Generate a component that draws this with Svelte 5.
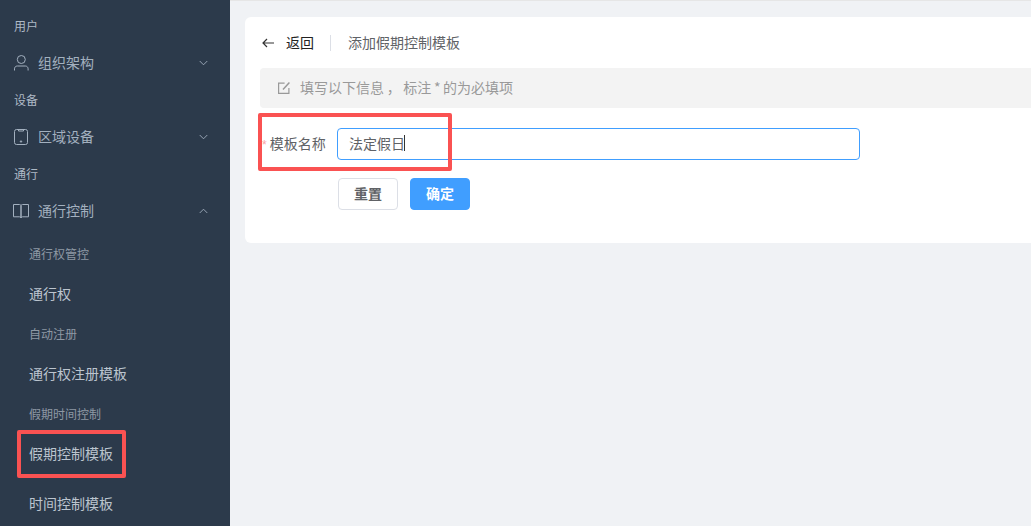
<script>
    let name = '法定假日'

    const subItems = [
        { label: '通行权管控', small: true },
        { label: '通行权' },
        { label: '自动注册', small: true },
        { label: '通行权注册模板' },
        { label: '假期时间控制', small: true },
        { label: '假期控制模板', marked: true },
        { label: '时间控制模板', last: true }
    ]
</script>

<div class="layout">
    <aside class="sidebar">
        <div class="group">用户</div>
        <div class="menu">
            <svg class="icon" viewBox="0 0 16 16" fill="none" stroke="currentColor" stroke-width="1">
                <circle cx="8.300" cy="4.500" r="4" />
                <path d="M1.500 15.500v-1.700c0-1.600 1.200-2.800 2.800-2.800h8c1.600 0 2.800 1.200 2.800 2.800v1.700" />
            </svg>
            <span>组织架构</span>
            <svg class="chev" viewBox="0 0 10 6" fill="none" stroke="currentColor"><path d="M.8.8 5 5 9.200.8" /></svg>
        </div>
        <div class="group">设备</div>
        <div class="menu">
            <svg class="icon" viewBox="0 0 16 16" fill="none" stroke="currentColor" stroke-width="1">
                <rect x="1.500" y=".5" width="13" height="15" rx="2" />
                <path d="M5.500 .5v1.500h5V.5" />
                <circle cx="8" cy="12.500" r=".7" fill="currentColor" />
            </svg>
            <span>区域设备</span>
            <svg class="chev" viewBox="0 0 10 6" fill="none" stroke="currentColor"><path d="M.8.8 5 5 9.200.8" /></svg>
        </div>
        <div class="group">通行</div>
        <div class="menu">
            <svg class="icon" viewBox="0 0 16 16" fill="none" stroke="currentColor" stroke-width="1">
                <path d="M.5 1.500h6c.9 0 1.500.4 1.500 1.200v12.300c0-.7-.6-1.200-1.500-1.200h-6z" />
                <path d="M15.500 1.500h-6c-.9 0-1.500.4-1.500 1.200v12.300c0-.7.6-1.200 1.500-1.200h6z" />
            </svg>
            <span>通行控制</span>
            <svg class="chev" viewBox="0 0 10 6" fill="none" stroke="currentColor"><path d="M.8 5.200 5 1l4.200 4.200" /></svg>
        </div>
        <div class="sub">
            {#each subItems as item}
                <div class="subItem" class:small={item.small} class:last={item.last}>
                    {item.label}
                    {#if item.marked}<i class="mark sideMark"></i>{/if}
                </div>
            {/each}
        </div>
    </aside>

    <main class="content">
        <section class="card">
            <div class="pageHead">
                <svg class="back" viewBox="0 0 12 10" fill="none" stroke="currentColor" stroke-width="1.200">
                    <path d="M12 5H1M5 1 1 5l4 4" />
                </svg>
                <span class="backText">返回</span>
                <span class="divider"></span>
                <span class="title">添加假期控制模板</span>
            </div>

            <div class="notice">
                <svg class="editIcon" viewBox="0 0 12 12" fill="none" stroke="currentColor" stroke-width="1.200">
                    <path d="M10.900 6v5.400H.6V1.100h6" />
                    <path d="M5 7.500 11.400.6" stroke-width="1.500" />
                </svg>
                <span>填写以下信息 ， 标注 * 的为必填项</span>
            </div>

            <form class="row" on:submit|preventDefault>
                <label for="tpl"><em>*</em>模板名称</label>
                <div class="inputWrap">
                    <input id="tpl" type="text" bind:value={name} />
                    <i class="caret"></i>
                </div>
                <i class="mark formMark"></i>
            </form>

            <div class="btns">
                <button type="button" class="reset">重置</button>
                <button type="button" class="ok">确定</button>
            </div>
        </section>
    </main>
</div>

<style>
    :global(body) {
        margin: 0;
        overflow: hidden;
    }

    .layout {
        display: flex;
        width: 1031px;
        height: 526px;
        overflow: hidden;
        font-family: "Noto Sans CJK SC", "Liberation Sans", sans-serif;
        font-size: 14px;
    }

    .sidebar {
        flex: 0 0 230px;
        padding-top: 6px;
        box-sizing: border-box;
        background: #2c3a4b;
        color: #bfcbd9;
        overflow: hidden;
    }

    .group {
        height: 40px;
        padding-left: 14px;
        line-height: 40px;
        font-size: 12px;
        color: #aeb9c6;
    }

    .menu {
        display: flex;
        align-items: center;
        height: 34px;
        padding-left: 13px;
        padding-right: 22px;
        color: #a3b0bf;
    }

    .menu span {
        margin-left: 9px;
        padding-bottom: 2px;
    }

    .icon {
        width: 16px;
        height: 16px;
    }

    .chev {
        width: 9px;
        height: 6px;
        margin-left: auto;
    }

    .sub {
        margin-top: 5px;
        padding-left: 29px;
    }

    .subItem {
        position: relative;
        height: 40px;
        line-height: 40px;
        color: #bcc5cf;
    }

    .subItem.small {
        line-height: 42px;
        font-size: 12px;
        color: #8e98a4;
    }

    .subItem.last {
        margin-top: 10px;
    }

    .content {
        flex: 1;
        min-width: 0;
        padding: 16px 0 0 15px;
        background: #f0f2f5;
        border-top: 1px solid #e6e6e6;
        overflow: hidden;
    }

    .card {
        width: 900px;
        height: 226px;
        padding: 15px;
        box-sizing: border-box;
        background: #fff;
        border-radius: 6px;
    }

    .pageHead {
        display: flex;
        align-items: center;
        height: 21px;
        margin-left: 2px;
    }

    .back {
        width: 12px;
        height: 10px;
        color: #333;
    }

    .backText {
        margin-left: 12px;
        padding-bottom: 2px;
        font-size: 14px;
        color: #222;
    }

    .divider {
        width: 1px;
        height: 16px;
        margin: 0 17px 0 16px;
        background: #dcdfe6;
    }

    .title {
        padding-bottom: 2px;
        font-size: 14px;
        color: #606266;
    }

    .notice {
        display: flex;
        align-items: center;
        height: 40px;
        margin-top: 15px;
        padding-left: 18px;
        background: #f3f3f3;
        border-radius: 4px;
        color: #999;
        font-size: 14px;
    }

    .notice span {
        padding-bottom: 2px;
        word-spacing: -0.5px;
    }

    .editIcon {
        width: 12px;
        height: 12px;
        margin-right: 10px;
    }

    .row {
        position: relative;
        display: flex;
        align-items: center;
        height: 32px;
        margin-top: 20px;
    }

    label {
        width: 77px;
        padding-bottom: 2px;
        font-size: 14px;
        color: #606266;
        white-space: nowrap;
    }

    label em {
        margin: 0 3px 0 2px;
        font-family: "Liberation Sans", sans-serif;
        font-style: normal;
        font-size: 12px;
        color: #f9a5a5;
    }

    .inputWrap {
        position: relative;
        width: 523px;
        height: 32px;
    }

    input {
        width: 100%;
        height: 100%;
        padding: 0 11px 2px;
        box-sizing: border-box;
        border: 1px solid #409eff;
        border-radius: 4px;
        outline: none;
        font: inherit;
        color: #606266;
    }

    .caret {
        position: absolute;
        left: 67px;
        top: 7px;
        width: 1px;
        height: 16px;
        background: #333;
    }

    .btns {
        display: flex;
        gap: 12px;
        margin-top: 18px;
        margin-left: 78px;
    }

    button {
        width: 60px;
        height: 32px;
        padding: 0 0 2px;
        border-radius: 4px;
        font: inherit;
        font-size: 14px;
        font-weight: 700;
    }

    .reset {
        background: #fff;
        border: 1px solid #dcdfe6;
        color: #606266;
    }

    .ok {
        background: #409eff;
        border: 1px solid #409eff;
        color: #fff;
    }

    .mark {
        position: absolute;
        box-sizing: border-box;
        border: 4px solid #fa5252;
        border-radius: 2px;
        pointer-events: none;
    }

    .sideMark {
        left: -12px;
        top: -3px;
        width: 109px;
        height: 48px;
    }

    .formMark {
        left: -2px;
        top: -15px;
        width: 194px;
        height: 58px;
    }
</style>
